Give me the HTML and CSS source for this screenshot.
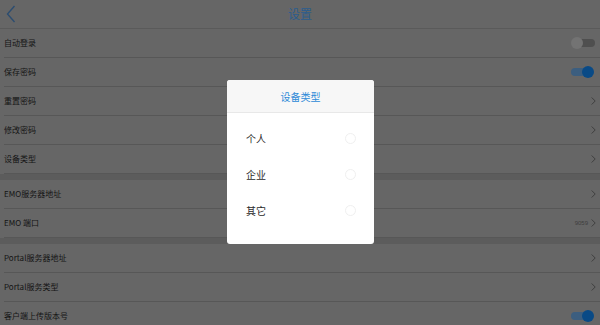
FILE: index.html
```html
<!DOCTYPE html>
<html lang="zh">
<head>
<meta charset="utf-8">
<link rel="stylesheet" href="styles.css">
</head>
<body>
<div class="screen">
  <header class="nav">
    <svg class="back" width="10" height="18" viewBox="0 0 10 18"><path d="M8.5 1 L1.5 9 L8.5 17" fill="none" stroke="#2c4d70" stroke-width="1.4"/></svg>
    <div class="nav-title">设置</div>
  </header>
  <div class="group">
    <div class="row"><div class="row-in"><span class="label">自动登录</span><span class="toggle off"><i class="track"></i><i class="knob"></i></span></div></div>
    <div class="row"><div class="row-in"><span class="label">保存密码</span><span class="toggle on"><i class="track"></i><i class="knob"></i></span></div></div>
    <div class="row"><div class="row-in"><span class="label">重置密码</span><svg class="chev" width="5" height="8" viewBox="0 0 5 8"><path d="M0.7 0.5 L4.2 4 L0.7 7.5" fill="none" stroke="#3c3c3c" stroke-width="0.9"/></svg></div></div>
    <div class="row"><div class="row-in"><span class="label">修改密码</span><svg class="chev" width="5" height="8" viewBox="0 0 5 8"><path d="M0.7 0.5 L4.2 4 L0.7 7.5" fill="none" stroke="#3c3c3c" stroke-width="0.9"/></svg></div></div>
    <div class="row"><div class="row-in"><span class="label">设备类型</span><svg class="chev" width="5" height="8" viewBox="0 0 5 8"><path d="M0.7 0.5 L4.2 4 L0.7 7.5" fill="none" stroke="#3c3c3c" stroke-width="0.9"/></svg></div></div>
  </div>
  <div class="gap"></div>
  <div class="group">
    <div class="row"><div class="row-in"><span class="label">EMO服务器地址</span><svg class="chev" width="5" height="8" viewBox="0 0 5 8"><path d="M0.7 0.5 L4.2 4 L0.7 7.5" fill="none" stroke="#3c3c3c" stroke-width="0.9"/></svg></div></div>
    <div class="row"><div class="row-in"><span class="label">EMO 端口</span><span class="value">9059</span><svg class="chev" width="5" height="8" viewBox="0 0 5 8"><path d="M0.7 0.5 L4.2 4 L0.7 7.5" fill="none" stroke="#3c3c3c" stroke-width="0.9"/></svg></div></div>
  </div>
  <div class="gap"></div>
  <div class="group">
    <div class="row"><div class="row-in"><span class="label">Portal服务器地址</span><svg class="chev" width="5" height="8" viewBox="0 0 5 8"><path d="M0.7 0.5 L4.2 4 L0.7 7.5" fill="none" stroke="#3c3c3c" stroke-width="0.9"/></svg></div></div>
    <div class="row"><div class="row-in"><span class="label">Portal服务类型</span><svg class="chev" width="5" height="8" viewBox="0 0 5 8"><path d="M0.7 0.5 L4.2 4 L0.7 7.5" fill="none" stroke="#3c3c3c" stroke-width="0.9"/></svg></div></div>
    <div class="row"><div class="row-in"><span class="label">客户端上传版本号</span><span class="toggle on"><i class="track"></i><i class="knob"></i></span></div></div>
  </div>

  <div class="dialog">
    <div class="dialog-head">设备类型</div>
    <div class="dialog-body">
      <div class="option"><span>个人</span><i class="radio"></i></div>
      <div class="option"><span>企业</span><i class="radio"></i></div>
      <div class="option"><span>其它</span><i class="radio"></i></div>
    </div>
  </div>
</div>
</body>
</html>
```
FILE: styles.css
```css
* { box-sizing: border-box; }
html, body { margin: 0; padding: 0; }
body {
  width: 600px;
  height: 325px;
  overflow: hidden;
  background: #666666;
  font-family: "Noto Sans CJK SC", "Noto Sans", sans-serif;
  color: #141414;
}
.screen {
  position: relative;
  width: 600px;
  height: 325px;
  overflow: hidden;
}
.nav {
  position: relative;
  height: 29px;
  border-bottom: 1px solid #5a5a5a;
  display: flex;
  align-items: center;
  justify-content: center;
}
.back {
  position: absolute;
  left: 6px;
  top: 5px;
}
.nav-title {
  font-size: 12px;
  color: #2a5d8e;
  line-height: 1;
}
.row {
  padding-left: 4px;
}
.row-in {
  height: 29px;
  border-bottom: 1px solid #575757;
  display: flex;
  align-items: center;
  padding-right: 4px;
}
.label {
  font-size: 8px;
  flex: 1;
  line-height: 1;
}
.value {
  font-size: 6px;
  color: #3e3e3e;
  margin-right: 3px;
  font-family: "Liberation Sans", sans-serif;
}
.gap {
  height: 6px;
  background: #5c5c5c;
}
.toggle {
  position: relative;
  width: 24px;
  height: 12px;
  margin-right: 1px;
}
.toggle .track {
  position: absolute;
  top: 2px;
  height: 8px;
  border-radius: 4px;
}
.toggle .knob {
  position: absolute;
  top: 0;
  width: 12px;
  height: 12px;
  border-radius: 50%;
}
.toggle.off .track { background: #4f4f4f; left: 4px; right: 0; }
.toggle.off .knob { left: 0; background: #737373; }
.toggle.on .track { background: #3c5e7f; right: 4px; left: 0; }
.toggle.on .knob { right: 1px; background: #094a86; }

.dialog {
  position: absolute;
  left: 227px;
  top: 80px;
  width: 147px;
  height: 164px;
  background: #ffffff;
  border-radius: 3px;
  overflow: hidden;
}
.dialog-head {
  height: 33px;
  background: #f7f7f7;
  border-bottom: 1px solid #e8e8e8;
  display: flex;
  align-items: center;
  justify-content: center;
  font-size: 10px;
  color: #2d8ad8;
}
.dialog-body {
  padding-top: 7px;
}
.option {
  height: 36px;
  display: flex;
  align-items: center;
  padding-left: 19px;
  padding-right: 18px;
  font-size: 10px;
  color: #2a2a2a;
}
.option span { flex: 1; }
.radio {
  width: 11px;
  height: 11px;
  border-radius: 50%;
  border: 1px solid #f0f0f0;
}
```
